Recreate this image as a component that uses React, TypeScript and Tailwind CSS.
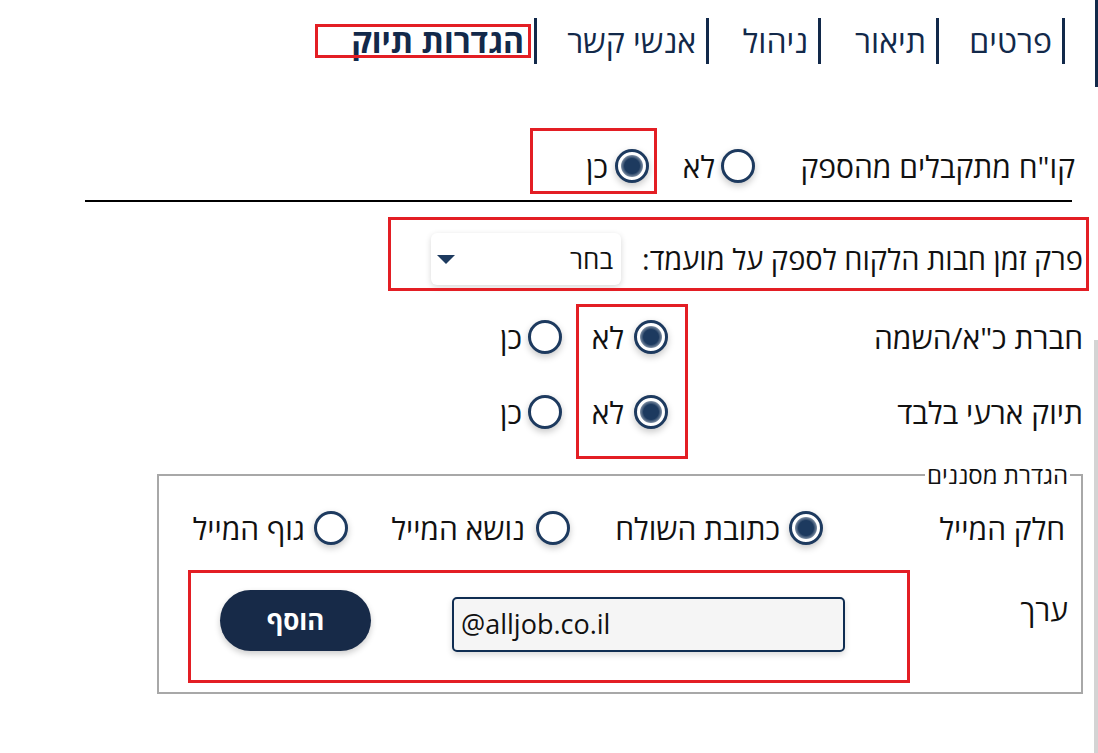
import React from "react";

function Radio({ checked }: { checked?: boolean }) {
  return (
    <span className="flex h-[34px] w-[34px] shrink-0 items-center justify-center rounded-full border-[3px] border-[#1d3a5f] bg-white shadow-[0_3px_7px_rgba(0,0,0,0.22)]">
      {checked && (
        <span className="h-[22px] w-[22px] rounded-full bg-[radial-gradient(circle,#1d3a5f_0%,#1d3a5f_48%,#ffffff_100%)]" />
      )}
    </span>
  );
}

function Option({
  label,
  checked,
  w,
  gap,
}: {
  label: string;
  checked?: boolean;
  w?: string;
  gap: string;
}) {
  return (
    <div className={`flex items-center ${gap} ${w ?? ""}`}>
      <Radio checked={checked} />
      <span className="whitespace-nowrap">{label}</span>
    </div>
  );
}

function Tab({ label, w, bold }: { label: string; w?: string; bold?: boolean }) {
  return (
    <div
      className={`flex h-[46px] items-center border-r-[3px] border-[#12294a] pr-[10px] ${w ?? ""}`}
    >
      <span
        className={`whitespace-nowrap text-[32px] leading-none text-[#12294a] ${bold ? "font-bold" : ""}`}
      >
        {label}
      </span>
    </div>
  );
}

export default function App() {
  return (
    <div
      dir="rtl"
      className="relative flex h-[753px] w-[1098px] overflow-hidden bg-white text-[#111]"
      style={{ fontFamily: '"Open Sans", "Liberation Sans", sans-serif' }}
    >
      {/* right edge strip */}
      <div className="flex w-[4px] shrink-0 flex-col">
        <div className="h-[87px] w-[3px] bg-[#12294a]" />
        <div className="mt-[253px] flex-1 bg-[#d4d4d4]" />
      </div>

      {/* content */}
      <div className="flex w-[1094px] flex-col">
        {/* tabs */}
        <div className="mt-[18px] flex pr-[29px]">
          <Tab label="פרטים" w="w-[126px]" />
          <Tab label="תיאור" w="w-[118px]" />
          <Tab label="ניהול" w="w-[112px]" />
          <Tab label="אנשי קשר" w="w-[172px]" />
          <Tab label="הגדרות תיוק" bold />
        </div>

        {/* row 1 */}
        <div className="mt-[82px] flex h-[40px] items-center pr-[19px] text-[30px]">
          <div className="w-[320px] whitespace-nowrap">קו"ח מתקבלים מהספק</div>
          <Option label="לא" w="w-[106px]" gap="gap-[6px]" />
          <Option label="כן" checked gap="gap-[7px]" />
        </div>

        {/* line */}
        <div className="mr-[22px] ml-[85px] mt-[14px] h-[2px] bg-black" />

        {/* row 2 */}
        <div className="mt-[31px] flex h-[52px] items-center pr-[11px]">
          <div className="w-[462px] whitespace-nowrap text-[29px]">
            פרק זמן חבות הלקוח לספק על מועמד:
          </div>
          <div className="flex h-[52px] w-[190px] items-center justify-between rounded-[6px] bg-white pr-[8px] pl-[6px] shadow-[0_2px_6px_rgba(0,0,0,0.16)]">
            <span className="text-[26px]">בחר</span>
            <span className="h-0 w-0 border-t-[9px] border-r-[9px] border-l-[9px] border-t-[#1d3a5f] border-r-transparent border-l-transparent" />
          </div>
        </div>

        {/* row 3 */}
        <div className="mt-[35px] flex h-[34px] items-center pr-[11px] text-[30px]">
          <div className="w-[415px] whitespace-nowrap">חברת כ"א/השמה</div>
          <Option label="לא" checked w="w-[106px]" gap="gap-[10px]" />
          <Option label="כן" gap="gap-[6px]" />
        </div>

        {/* row 4 */}
        <div className="mt-[41px] flex h-[34px] items-center pr-[11px] text-[30px]">
          <div className="w-[415px] whitespace-nowrap">תיוק ארעי בלבד</div>
          <Option label="לא" checked w="w-[106px]" gap="gap-[10px]" />
          <Option label="כן" gap="gap-[6px]" />
        </div>

        {/* fieldset */}
        <fieldset className="mt-[33px] mr-[11px] h-[232px] w-[926px] border-2 border-[#a8a8a8]">
          <legend className="mr-[11px] px-[2px] text-[24px] leading-[26px]">הגדרת מסננים</legend>

          <div className="mt-[23px] flex h-[34px] items-center pr-[16px] text-[30px]">
            <div className="w-[242px] whitespace-nowrap">חלק המייל</div>
            <Option label="כתובת השולח" checked w="w-[253px]" gap="gap-[9px]" />
            <Option label="נושא המייל" w="w-[222px]" gap="gap-[11px]" />
            <Option label="גוף המייל" gap="gap-[9px]" />
          </div>

          <div className="mt-[45px] flex items-start pr-[13px]">
            <div className="mt-[0px] w-[223px] whitespace-nowrap text-[30px] leading-[40px]">ערך</div>
            <div
              dir="ltr"
              className="mt-[7px] flex h-[55px] w-[393px] items-center rounded-[5px] border-2 border-[#0f2d52] bg-[#f5f5f5] pl-[7px] text-[27px] shadow-[0_3px_6px_rgba(0,0,0,0.15)]"
            >
              @alljob.co.il
            </div>
            <button className="mr-[81px] h-[61px] w-[151px] rounded-full bg-[#172a48] text-[26px] font-bold text-white shadow-[0_3px_6px_rgba(0,0,0,0.2)]">
              הוסף
            </button>
          </div>
        </fieldset>
      </div>

      {/* red annotation boxes */}
      <div className="pointer-events-none absolute left-[315px] top-[24px] h-[34px] w-[216px] border-[3px] border-[#e31e24]" />
      <div className="pointer-events-none absolute left-[530px] top-[128px] h-[66px] w-[127px] border-[3px] border-[#e31e24]" />
      <div className="pointer-events-none absolute left-[388px] top-[217px] h-[74px] w-[701px] border-[3px] border-[#e31e24]" />
      <div className="pointer-events-none absolute left-[576px] top-[304px] h-[155px] w-[112px] border-[3px] border-[#e31e24]" />
      <div className="pointer-events-none absolute left-[188px] top-[570px] h-[113px] w-[722px] border-[3px] border-[#e31e24]" />
    </div>
  );
}
